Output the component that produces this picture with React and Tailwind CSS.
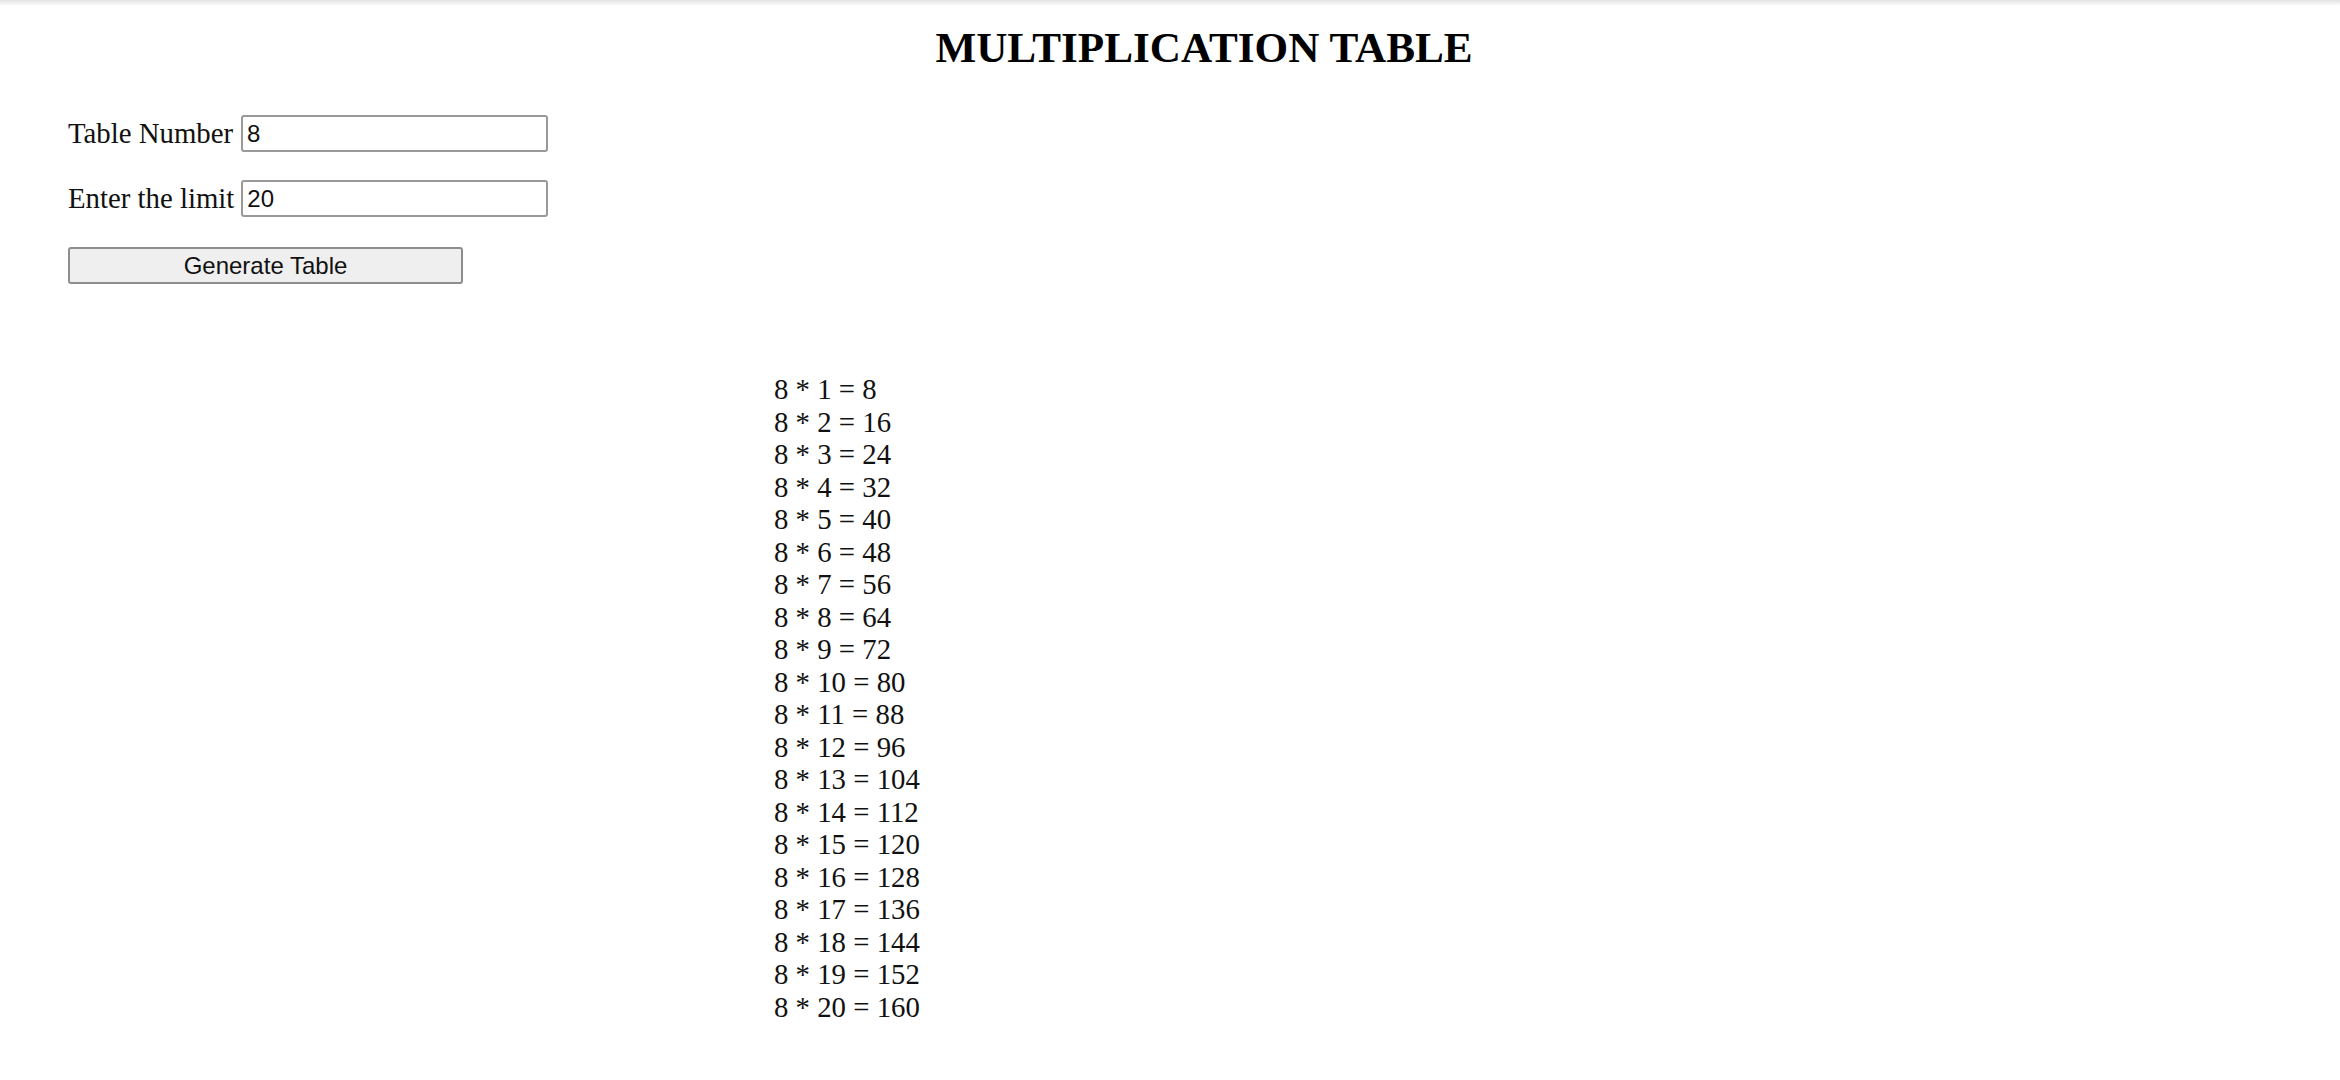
import React from "react";

export default function App() {
  const num = 8;
  const limit = 20;
  const rows = [];
  for (let i = 1; i <= limit; i++) rows.push(`${num} * ${i} = ${num * i}`);
  return (
    <div
      className="relative min-h-[1080px] w-full bg-white pl-[68px] pt-[24px] text-black"
      style={{ fontFamily: '"Liberation Serif", "Times New Roman", serif' }}
    >
      <div className="pointer-events-none absolute inset-x-0 top-0 h-[6px] bg-gradient-to-b from-[#e2e2e2] to-white" />
      <h1 className="h-[48px] text-center text-[43.2px] font-bold leading-[48px]">
        MULTIPLICATION TABLE
      </h1>

      <div className="mt-[43px] flex flex-col">
        <div className="flex h-[37px] items-center">
          <label className="text-[28.8px] leading-[37px] text-[#111]">Table Number</label>
          <input
            type="text"
            defaultValue="8"
            className="ml-[8px] h-[37px] w-[307px] rounded-[3px] border-2 border-[#999] bg-white px-[4px] text-[24px] text-[#111] outline-none"
            style={{ fontFamily: '"Liberation Sans", Arial, sans-serif' }}
          />
        </div>
        <div className="mt-[28px] flex h-[37px] items-center">
          <label className="text-[28.8px] leading-[37px] text-[#111]">Enter the limit</label>
          <input
            type="text"
            defaultValue="20"
            className="ml-[7px] h-[37px] w-[307px] rounded-[3px] border-2 border-[#999] bg-white px-[4px] text-[24px] text-[#111] outline-none"
            style={{ fontFamily: '"Liberation Sans", Arial, sans-serif' }}
          />
        </div>
        <button
          className="mt-[30px] h-[37px] w-[395px] rounded-[3px] border-2 border-[#8d8d8d] bg-[#efefef] text-[24px] leading-[33px] text-[#111]"
          style={{ fontFamily: '"Liberation Sans", Arial, sans-serif' }}
        >
          Generate Table
        </button>
      </div>

      <div className="ml-[706px] mt-[89px] text-[28.8px] leading-[32.5px] text-[#111]">
        {rows.map((r) => (
          <div key={r}>{r}</div>
        ))}
      </div>
    </div>
  );
}
